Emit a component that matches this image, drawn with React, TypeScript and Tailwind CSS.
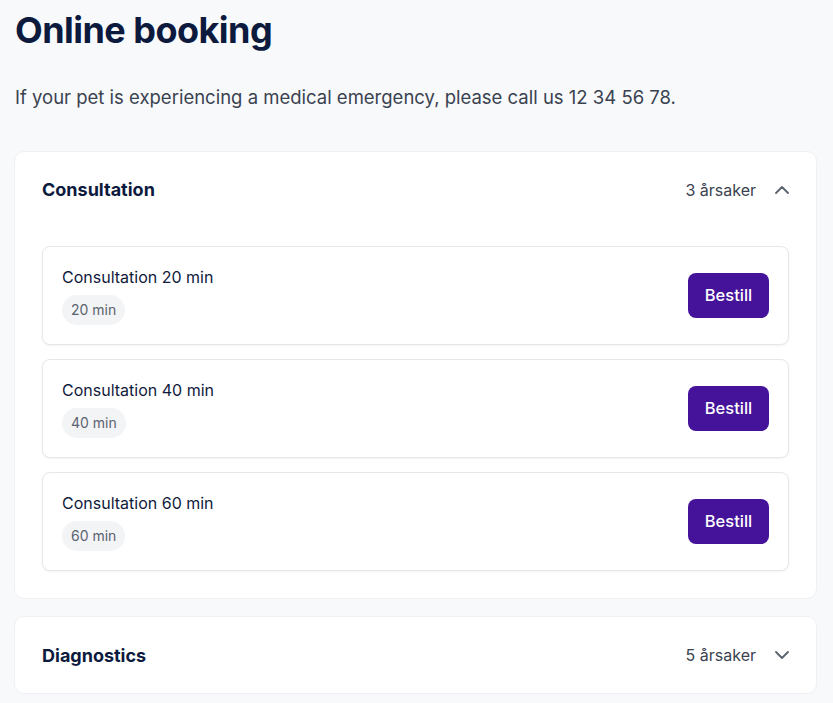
const consultations = [
  { title: "Consultation 20 min", duration: "20 min" },
  { title: "Consultation 40 min", duration: "40 min" },
  { title: "Consultation 60 min", duration: "60 min" },
];

function Chevron({ up }: { up?: boolean }) {
  return (
    <svg width="14" height="8" viewBox="0 0 14 8" fill="none" className="text-[#5b6370]">
      <path
        d={up ? "M1 7l6-6 6 6" : "M1 1l6 6 6-6"}
        stroke="currentColor"
        strokeWidth="1.8"
        strokeLinecap="round"
        strokeLinejoin="round"
      />
    </svg>
  );
}

function ReasonCard({ title, duration }: { title: string; duration: string }) {
  return (
    <div className="flex items-center justify-between rounded-lg border border-[#e5e7eb] bg-white p-[19px] shadow-[0_1px_2px_rgba(16,24,40,0.05)]">
      <div className="flex flex-col items-start">
        <h3 className="text-[16px] leading-[22px] text-[#101a3c]">{title}</h3>
        <span className="mt-[7px] rounded-full bg-[#f3f4f6] px-[9px] py-[5px] text-[14px] leading-[20px] text-[#5b6370]">
          {duration}
        </span>
      </div>
      <button className="h-[45px] w-[81px] rounded-lg bg-[#45139a] text-[16.5px] font-medium text-white">
        Bestill
      </button>
    </div>
  );
}

function SectionHeader({ title, count, open }: { title: string; count: string; open?: boolean }) {
  return (
    <div className={`flex items-center justify-between ${open ? "h-[75px]" : "h-[76px]"}`}>
      <h2 className="text-[18px] font-bold text-[#0c1a3d]">{title}</h2>
      <div className="flex items-center gap-[19px] text-[16px] text-[#3a4250]">
        <span>{count}</span>
        <Chevron up={open} />
      </div>
    </div>
  );
}

export default function App() {
  return (
    <div
      className="min-h-screen bg-[#f8f9fb] pl-[14px] pr-[16px] pt-[8px] pb-6"
      style={{ fontFamily: "Inter, 'Noto Sans', sans-serif" }}
    >
      <h1 className="pl-px text-[36px] font-bold leading-[44px] tracking-[-0.015em] text-[#0c1a3d]">
        Online booking
      </h1>
      <p className="mt-[31px] pl-px text-[18.5px] leading-[28px] text-[#3a4250]">
        If your pet is experiencing a medical emergency, please call us 12 34 56 78.
      </p>

      <div className="mt-[40px] flex flex-col gap-[17px]">
        <section className="rounded-[10px] border border-[#eef0f3] bg-white px-[27px] pb-[27px]">
          <SectionHeader title="Consultation" count="3 årsaker" open />
          <div className="mt-[19px] flex flex-col gap-[14px]">
            {consultations.map((c) => (
              <ReasonCard key={c.title} {...c} />
            ))}
          </div>
        </section>

        <section className="rounded-[10px] border border-[#eef0f3] bg-white px-[27px]">
          <SectionHeader title="Diagnostics" count="5 årsaker" />
        </section>
      </div>
    </div>
  );
}
